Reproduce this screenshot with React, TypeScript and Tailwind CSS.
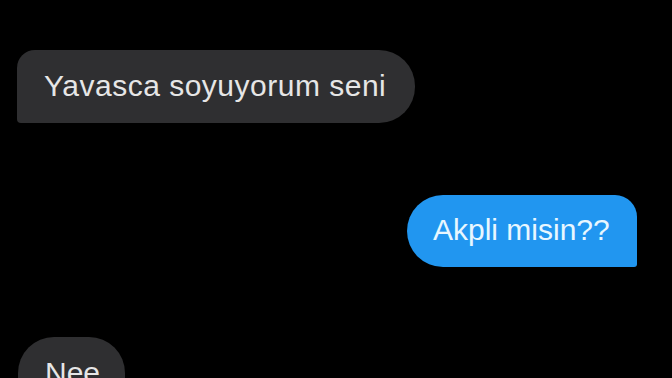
import React from "react";

export default function App() {
  const font = { fontFamily: '"Liberation Sans", Arial, sans-serif' };
  return (
    <div className="w-[672px] h-[378px] bg-black overflow-hidden flex flex-col pt-[50px]" style={font}>
      <div className="shrink-0 ml-[17px] w-[398px] h-[73px] bg-[#2f2f31] text-[#e6e6e6] text-[30px] leading-[36px] tracking-[0.5px] pl-[27px] pt-[18px] rounded-tl-[18px] rounded-r-[36px] rounded-bl-[4px] whitespace-nowrap">
        Yavasca soyuyorum seni
      </div>
      <div className="shrink-0 mt-[72px] self-end mr-[35px] w-[230px] h-[72px] bg-[#2196f0] text-[#e8f7ff] text-[30px] leading-[36px] pl-[26px] pt-[17px] rounded-l-[36px] rounded-tr-[22px] rounded-br-[3px] whitespace-nowrap">
        Akpli misin??
      </div>
      <div className="shrink-0 mt-[70px] ml-[18px] w-[107px] h-[73px] bg-[#2f2f31] text-[#e6e6e6] text-[30px] leading-[36px] pl-[27px] pt-[18px] rounded-t-[36px] whitespace-nowrap">
        Nee
      </div>
    </div>
  );
}
